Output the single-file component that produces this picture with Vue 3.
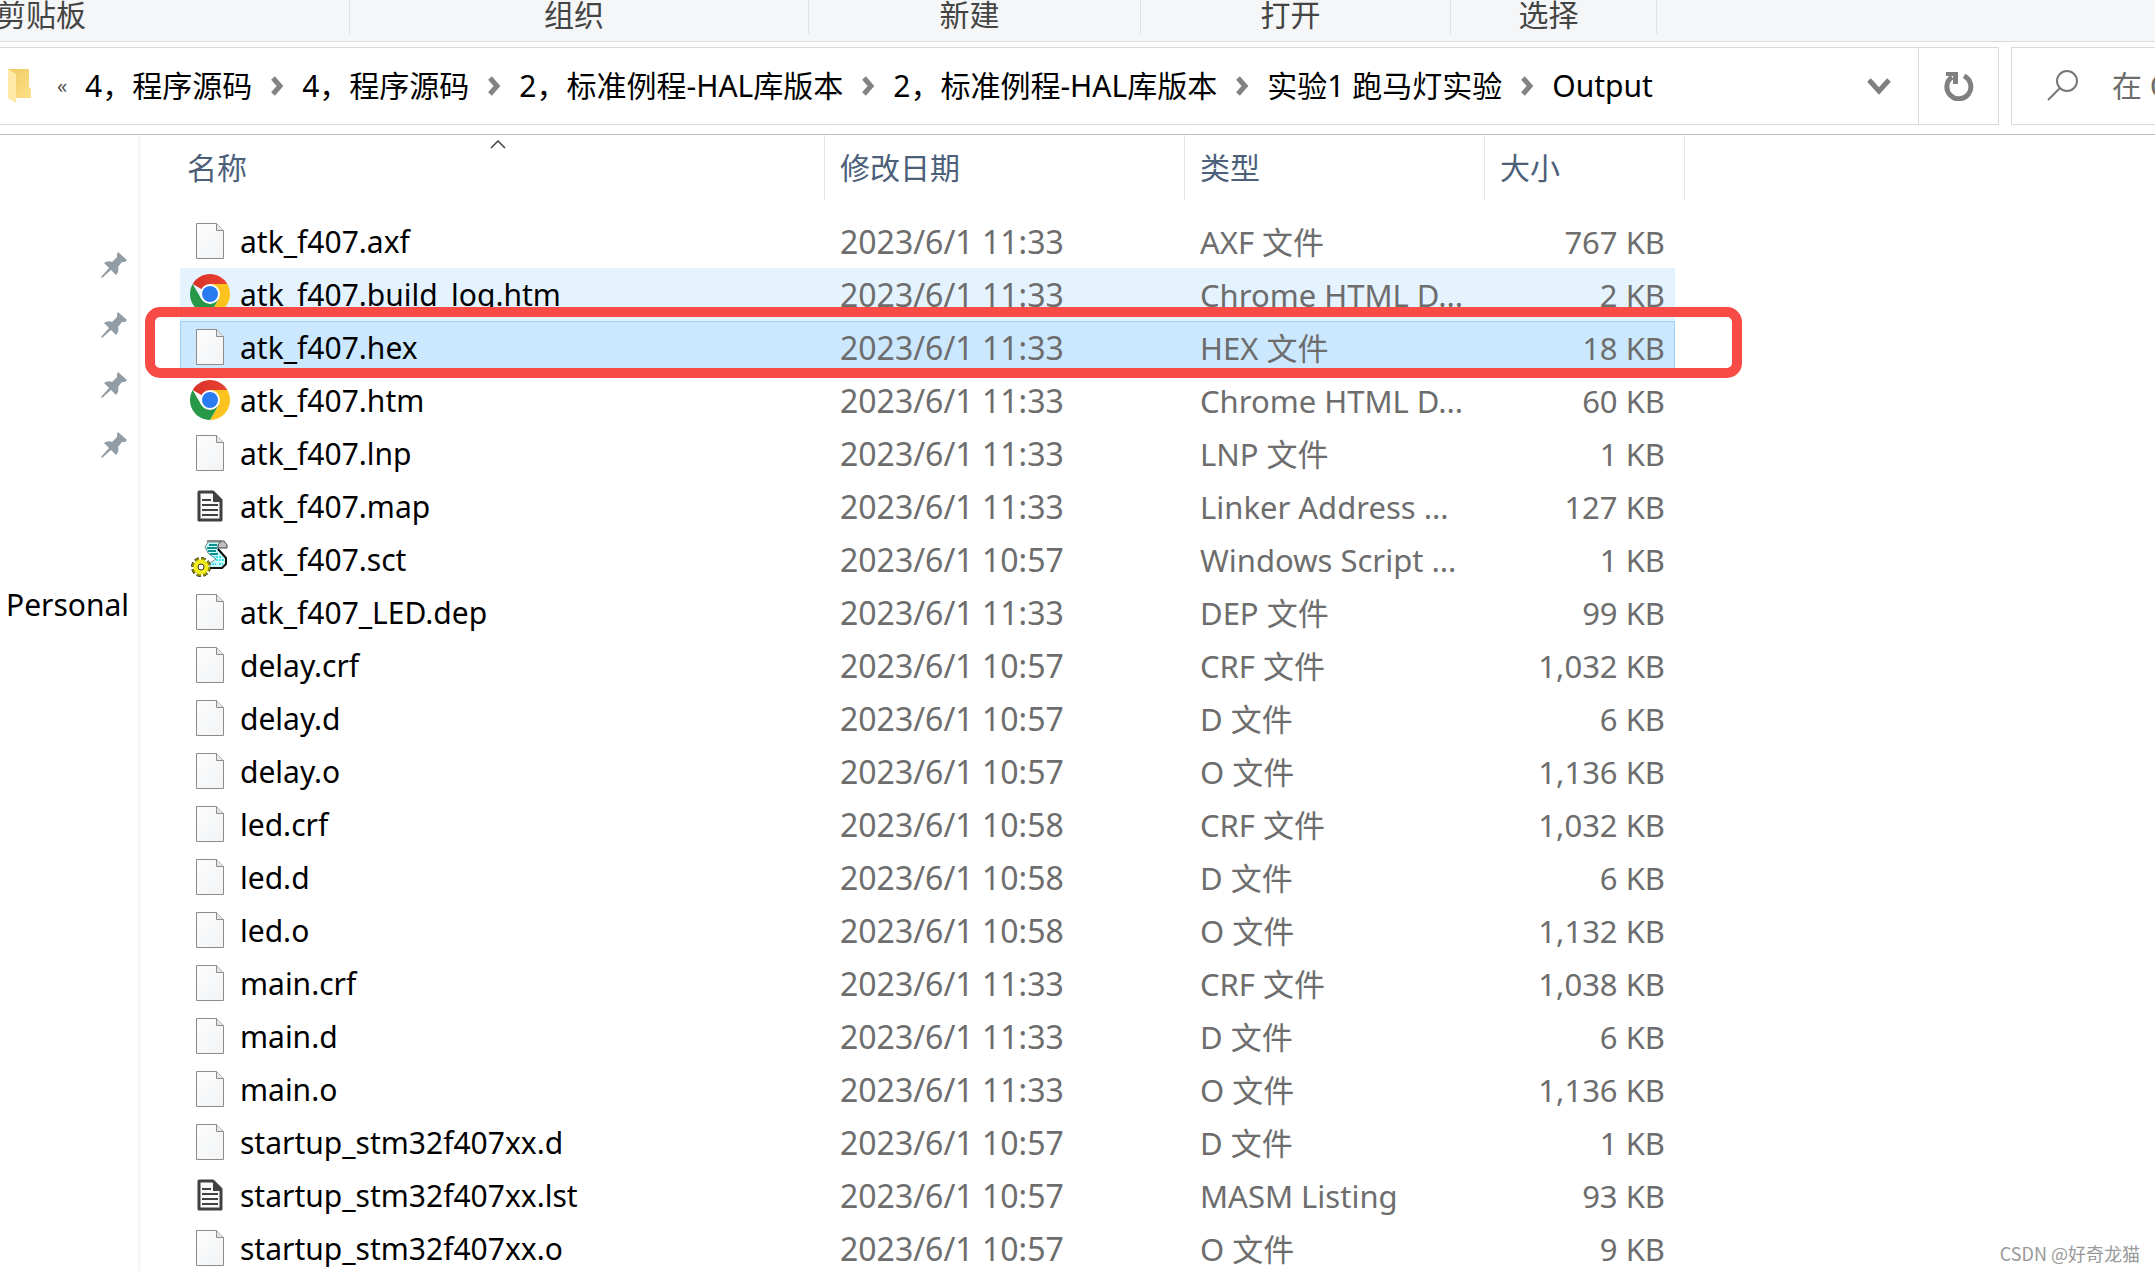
<script setup>
const groups = [
  { label: '剪贴板', cls: 'clipboard' },
  { label: '组织', cls: 'organize' },
  { label: '新建', cls: 'create' },
  { label: '打开', cls: 'open' },
  { label: '选择', cls: 'select' },
]

const crumbs = [
  '4，程序源码',
  '4，程序源码',
  '2，标准例程-HAL库版本',
  '2，标准例程-HAL库版本',
  '实验1 跑马灯实验',
  'Output',
]

const file = (name, time, type, size, icon = 'doc', state = '') => ({
  name,
  date: `2023/6/1 ${time}`,
  type,
  size: `${size} KB`,
  icon,
  state,
})

const files = [
  file('atk_f407.axf', '11:33', 'AXF 文件', '767'),
  file('atk_f407.build_log.htm', '11:33', 'Chrome HTML D...', '2', 'chrome', 'hover'),
  file('atk_f407.hex', '11:33', 'HEX 文件', '18', 'doc', 'selected'),
  file('atk_f407.htm', '11:33', 'Chrome HTML D...', '60', 'chrome'),
  file('atk_f407.lnp', '11:33', 'LNP 文件', '1'),
  file('atk_f407.map', '11:33', 'Linker Address ...', '127', 'text'),
  file('atk_f407.sct', '10:57', 'Windows Script ...', '1', 'script'),
  file('atk_f407_LED.dep', '11:33', 'DEP 文件', '99'),
  file('delay.crf', '10:57', 'CRF 文件', '1,032'),
  file('delay.d', '10:57', 'D 文件', '6'),
  file('delay.o', '10:57', 'O 文件', '1,136'),
  file('led.crf', '10:58', 'CRF 文件', '1,032'),
  file('led.d', '10:58', 'D 文件', '6'),
  file('led.o', '10:58', 'O 文件', '1,132'),
  file('main.crf', '11:33', 'CRF 文件', '1,038'),
  file('main.d', '11:33', 'D 文件', '6'),
  file('main.o', '11:33', 'O 文件', '1,136'),
  file('startup_stm32f407xx.d', '10:57', 'D 文件', '1'),
  file('startup_stm32f407xx.lst', '10:57', 'MASM Listing', '93', 'text'),
  file('startup_stm32f407xx.o', '10:57', 'O 文件', '9'),
]
</script>

<template>
  <div class="explorer">
    <svg class="defs" width="0" height="0" aria-hidden="true">
      <defs>
        <linearGradient id="paper" x1="0" y1="0" x2="1" y2="1">
          <stop offset="0" stop-color="#fdfdfd" />
          <stop offset="1" stop-color="#f1f3f5" />
        </linearGradient>
        <linearGradient id="chrome-red" x1="0" y1="0" x2="1" y2="0">
          <stop offset="0" stop-color="#d93025" />
          <stop offset="1" stop-color="#ea4335" />
        </linearGradient>
        <linearGradient id="folder-back" x1="0" y1="0" x2="1" y2="1">
          <stop offset="0" stop-color="#efca60" />
          <stop offset="1" stop-color="#fde08a" />
        </linearGradient>
      </defs>
    </svg>

    <header class="ribbon">
      <div v-for="g in groups" :key="g.label" class="group" :class="g.cls">{{ g.label }}</div>
    </header>

    <div class="address-row">
      <nav class="address" aria-label="地址">
        <svg class="folder" width="24" height="36" viewBox="0 0 24 36" aria-hidden="true">
          <path d="M0 1h21v18l2 2v9H6z" fill="url(#folder-back)" />
          <path d="M0 1l8 5v29L0 30z" fill="#ffe9a6" />
        </svg>
        <span class="more">«</span>
        <ol class="crumbs">
          <li v-for="(c, i) in crumbs" :key="i">
            <svg v-if="i" class="sep" width="14" height="20" viewBox="0 0 14 20" aria-hidden="true">
              <path d="M3 2l7 8-7 8" fill="none" stroke="#838383" stroke-width="5" />
            </svg>
            <a href="#">{{ c }}</a>
          </li>
        </ol>
        <button class="drop" aria-label="以前的位置">
          <svg width="24" height="18" viewBox="0 0 24 18">
            <path d="M2 3l10 11L22 3" fill="none" stroke="#7f7f7f" stroke-width="5" />
          </svg>
        </button>
        <button class="refresh" aria-label="刷新">
          <svg width="30" height="30" viewBox="0 0 30 30">
            <path d="M20 5A12 12 0 1 1 8 6" fill="none" stroke="#808080" stroke-width="5" />
            <path d="M2 1h12v12h-5V5H2z" fill="#808080" />
          </svg>
        </button>
      </nav>
      <label class="search">
        <svg width="32" height="32" viewBox="0 0 32 32" aria-hidden="true">
          <circle cx="20" cy="11" r="10" fill="none" stroke="#777" stroke-width="2" />
          <path d="M13 18L1 30" stroke="#777" stroke-width="2" />
        </svg>
        <input type="text" aria-label="搜索" placeholder="在 Output 中搜索" />
      </label>
    </div>

    <main class="body">
      <aside class="side">
        <ul class="pins">
          <li v-for="n in 4" :key="n">
            <svg width="26" height="26" viewBox="0 0 26 26" aria-hidden="true">
              <path
                d="M17 0l9 8-2 2h-3l-4 5c1 3 0 6-2 8l-5-5-9 8-1-1 8-9-5-5c3-2 6-2 8-1l5-5V2z"
                fill="#929ca4"
              />
            </svg>
          </li>
        </ul>
        <a class="personal" href="#">Personal</a>
      </aside>

      <section class="files">
        <table>
          <colgroup>
            <col class="c-name" />
            <col class="c-date" />
            <col class="c-type" />
            <col class="c-size" />
            <col class="c-edge" />
          </colgroup>
          <thead>
            <tr>
              <th class="first">
                <button>
                  名称
                  <svg class="caret" width="16" height="9" viewBox="0 0 16 9" aria-hidden="true">
                    <path d="M1 8l7-7 7 7" fill="none" stroke="#444" stroke-width="1.500" />
                  </svg>
                </button>
              </th>
              <th><button>修改日期</button></th>
              <th><button>类型</button></th>
              <th colspan="2"><button>大小</button></th>
            </tr>
          </thead>
          <tbody>
            <tr v-for="f in files" :key="f.name" :class="f.state">
              <td>
                <div class="name">
                  <svg v-if="f.icon === 'doc'" width="40" height="40" viewBox="0 0 40 40">
                    <path d="M6.500 2.500h20l7 7v28h-27z" fill="url(#paper)" stroke="#8c8c8c" />
                    <path d="M26.500 2.500v7h7" fill="#e6e6e6" stroke="#8c8c8c" />
                  </svg>
                  <svg v-else-if="f.icon === 'chrome'" width="40" height="40" viewBox="0 0 40 40">
                    <path d="M20 20L2.680 10A20 20 0 0 1 37.320 10z" fill="url(#chrome-red)" />
                    <path d="M20 10h17.320A20 20 0 0 1 20 40l8.660-15z" fill="#fcc31e" />
                    <path d="M28.660 25L20 40A20 20 0 0 1 2.680 10L11.340 25z" fill="#279847" />
                    <circle cx="20" cy="20" r="10" fill="#fff" />
                    <circle cx="20" cy="20" r="8" fill="#2a7af0" />
                  </svg>
                  <svg v-else-if="f.icon === 'text'" width="40" height="40" viewBox="0 0 40 40">
                    <path d="M9 6h14l8 8v20H9z" fill="#fafafa" stroke="#404042" stroke-width="3" stroke-linejoin="round" />
                    <path d="M23 5l9 9v2h-9z" fill="#404042" />
                    <path d="M12 14h9M12 19h16M12 24h16M12 29h16" stroke="#404042" stroke-width="2" />
                  </svg>
                  <svg v-else width="40" height="40" viewBox="0 0 40 40">
                    <path d="M18 3h14l-4 5v3l8 9v5l-4 4H20v-5l6-4-8-6-3-6z" fill="#c9fbfb" stroke="#6a8a8c" />
                    <path d="M19 6h8M17 9h10M18 12h8M20 15h8" stroke="#0e8e92" stroke-width="2" />
                    <path d="M23 18h8M26 21h8M22 25h4M29 25h4" stroke="#3ce0e6" stroke-width="2" stroke-dasharray="2 1" />
                    <path d="M17 2h14" stroke="#8a8a8a" stroke-width="2" />
                    <path d="M28 9V6l3-4h3l3 4v3z" fill="#c0c0c0" stroke="#444" />
                    <path d="M28 10l8 9v6l-4 4H20" fill="none" stroke="#111" stroke-width="2" />
                    <circle cx="11" cy="28" r="7" fill="none" stroke="#111" stroke-width="6" stroke-dasharray="3.500 2" />
                    <circle cx="11" cy="28" r="7" fill="none" stroke="#8d8800" stroke-width="5" stroke-dasharray="3.500 2" />
                    <circle cx="11" cy="28" r="5" fill="#fff" stroke="#f4ee1c" stroke-width="5" />
                    <circle cx="11" cy="28" r="3" fill="#fff" stroke="#333" />
                  </svg>
                  <span>{{ f.name }}</span>
                </div>
              </td>
              <td class="date">{{ f.date }}</td>
              <td>{{ f.type }}</td>
              <td class="size">{{ f.size }}</td>
            </tr>
          </tbody>
        </table>
      </section>

      <div class="marker"></div>
    </main>

    <div class="watermark">CSDN @好奇龙猫</div>
  </div>
</template>

<style>
body {
  background: #fff;
  overflow: hidden;
}
</style>

<style scoped>
.explorer {
  position: relative;
  height: 100vh;
  overflow: hidden;
  display: flex;
  flex-direction: column;
  color: #000;
  font-family: 'Noto Sans', 'Noto Sans CJK SC', sans-serif;
  font-size: 30px;
  line-height: 40px;
}

.defs {
  position: absolute;
}

a {
  color: inherit;
  text-decoration: none;
}

button,
input {
  padding: 0;
  border: 0;
  background: none;
  color: inherit;
  font: inherit;
}

ul,
ol {
  margin: 0;
  padding: 0;
  list-style: none;
}

.ribbon {
  flex: none;
  display: flex;
  height: 41px;
  border-bottom: 1px solid #dadbdc;
  background: #f5f6f7;
  color: #444;
}

.group {
  box-sizing: border-box;
  height: 34px;
  padding-right: 10px;
  border-right: 1px solid #dfe0e2;
  line-height: 30px;
  text-align: center;
}

.clipboard {
  width: 350px;
  text-align: left;
  text-indent: -4px;
}

.organize {
  width: 459px;
}

.create {
  width: 332px;
}

.open {
  width: 310px;
}

.select {
  width: 206px;
}

.address-row {
  flex: none;
  display: flex;
  gap: 12px;
  padding: 5px 0 9px;
  border-bottom: 1px solid #bdbdbd;
}

.address {
  flex: 1;
  box-sizing: border-box;
  display: flex;
  align-items: center;
  height: 78px;
  padding-left: 8px;
  border: 1px solid #d9d9d9;
  border-left: 0;
}

.folder {
  flex: none;
}

.more {
  width: 28px;
  padding-left: 25px;
  color: #555;
  font-size: 20px;
}

.crumbs {
  flex: 1;
  display: flex;
}

.crumbs li {
  display: flex;
  align-items: center;
  white-space: nowrap;
}

.sep {
  margin: 0 18px;
}

.drop {
  display: flex;
  padding: 0 27px;
}

.refresh {
  display: flex;
  align-items: center;
  justify-content: center;
  width: 80px;
  height: 100%;
  border-left: 1px solid #d9d9d9;
}

.search {
  box-sizing: border-box;
  display: flex;
  align-items: center;
  gap: 33px;
  width: 144px;
  height: 78px;
  padding-left: 35px;
  border: 1px solid #d9d9d9;
  border-right: 0;
  overflow: hidden;
}

.search svg {
  flex: none;
}

.search input {
  flex: none;
  width: 260px;
}

.search input::placeholder {
  color: #6d6d6d;
  opacity: 1;
}

.body {
  position: relative;
  flex: 1;
  min-height: 0;
  display: flex;
}

.side {
  box-sizing: border-box;
  width: 141px;
  padding: 117px 11px 0 6px;
  border-right: 3px solid #f7f7f7;
}

.pins {
  display: flex;
  flex-direction: column;
  align-items: flex-end;
  gap: 34px;
}

.pins li {
  height: 26px;
}

.pins svg {
  display: block;
}

.personal {
  display: block;
  margin-top: 127px;
}

.files {
  padding-left: 39px;
}

table {
  width: 1505px;
  border-collapse: separate;
  border-spacing: 0;
  table-layout: fixed;
}

.c-name {
  width: 645px;
}

.c-date {
  width: 360px;
}

.c-type {
  width: 300px;
}

.c-size {
  width: 190px;
}

.c-edge {
  width: 10px;
}

th {
  height: 80px;
  padding: 0;
  vertical-align: top;
  font-weight: 400;
}

th button {
  position: relative;
  display: block;
  width: 100%;
  height: 65px;
  padding: 0 0 0 15px;
  border-right: 1px solid #e5e5e5;
  color: #4c607a;
  text-align: left;
}

th.first button {
  padding-left: 7px;
}

.caret {
  position: absolute;
  top: 5px;
  left: 50%;
  margin-left: -12px;
}

td {
  box-sizing: border-box;
  height: 53px;
  padding: 0 0 0 15px;
  color: #6d6d6d;
  font-size: 31px;
  white-space: nowrap;
}

td:first-child {
  padding: 1px 0 0 10px;
  color: #000;
  font-size: 30px;
}

.name {
  display: flex;
  align-items: flex-start;
  gap: 10px;
  line-height: 42px;
}

td.date {
  font-size: 32px;
}

td.size {
  padding: 0 10px 0 0;
  text-align: right;
}

.hover td {
  background: #e5f3ff;
}

.selected td {
  background: #cce8ff;
  box-shadow: inset 0 1px #99d1ff;
}

.selected td:first-child {
  box-shadow: inset 1px 1px #99d1ff;
}

.selected td.size {
  box-shadow: inset -1px 1px #99d1ff;
}

.marker {
  position: absolute;
  top: 172px;
  left: 145px;
  box-sizing: border-box;
  width: 1597px;
  height: 71px;
  border: 10px solid #f84b46;
  border-radius: 15px;
}

.watermark {
  position: absolute;
  right: 15px;
  bottom: 6px;
  color: #999;
  font-family: 'Noto Sans CJK SC', sans-serif;
  font-size: 18px;
  line-height: 24px;
}
</style>
